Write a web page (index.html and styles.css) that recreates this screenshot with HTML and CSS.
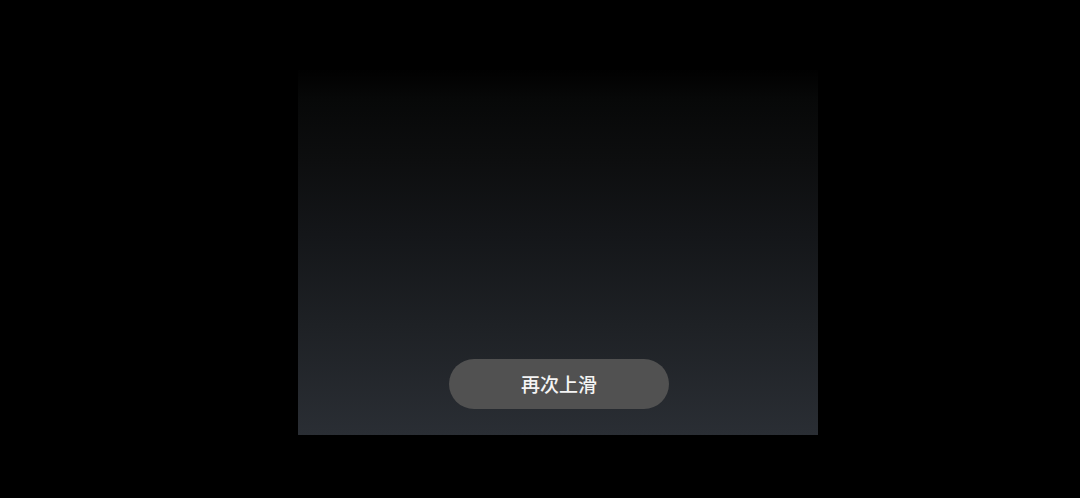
FILE: index.html
```html
<!DOCTYPE html>
<html lang="zh">
<head>
<meta charset="utf-8">
<link rel="stylesheet" href="styles.css">
</head>
<body>
<div class="stage">
  <div class="panel">
    <div class="toast">再次上滑</div>
  </div>
</div>
</body>
</html>
```
FILE: styles.css
```css
html, body {
  margin: 0;
  padding: 0;
  background: #000;
  width: 1080px;
  height: 498px;
  overflow: hidden;
}
.stage {
  padding-top: 70px;
  padding-left: 298px;
}
.panel {
  width: 520px;
  height: 365px;
  box-sizing: border-box;
  background: linear-gradient(180deg, #010101 0%, #070808 8%, #0d0e0f 25%, #141619 45%, #1e2125 70%, #2a2e34 100%);
  display: flex;
  flex-direction: column;
  justify-content: flex-end;
  align-items: center;
  padding-bottom: 26px;
}
.toast {
  width: 220px;
  height: 50px;
  margin-left: 2px;
  border-radius: 25px;
  background: #515151;
  color: #f4f4f4;
  font-family: "Noto Sans CJK SC", "Noto Sans", sans-serif;
  font-size: 19px;
  font-weight: 500;
  line-height: 50px;
  text-align: center;
}
```
